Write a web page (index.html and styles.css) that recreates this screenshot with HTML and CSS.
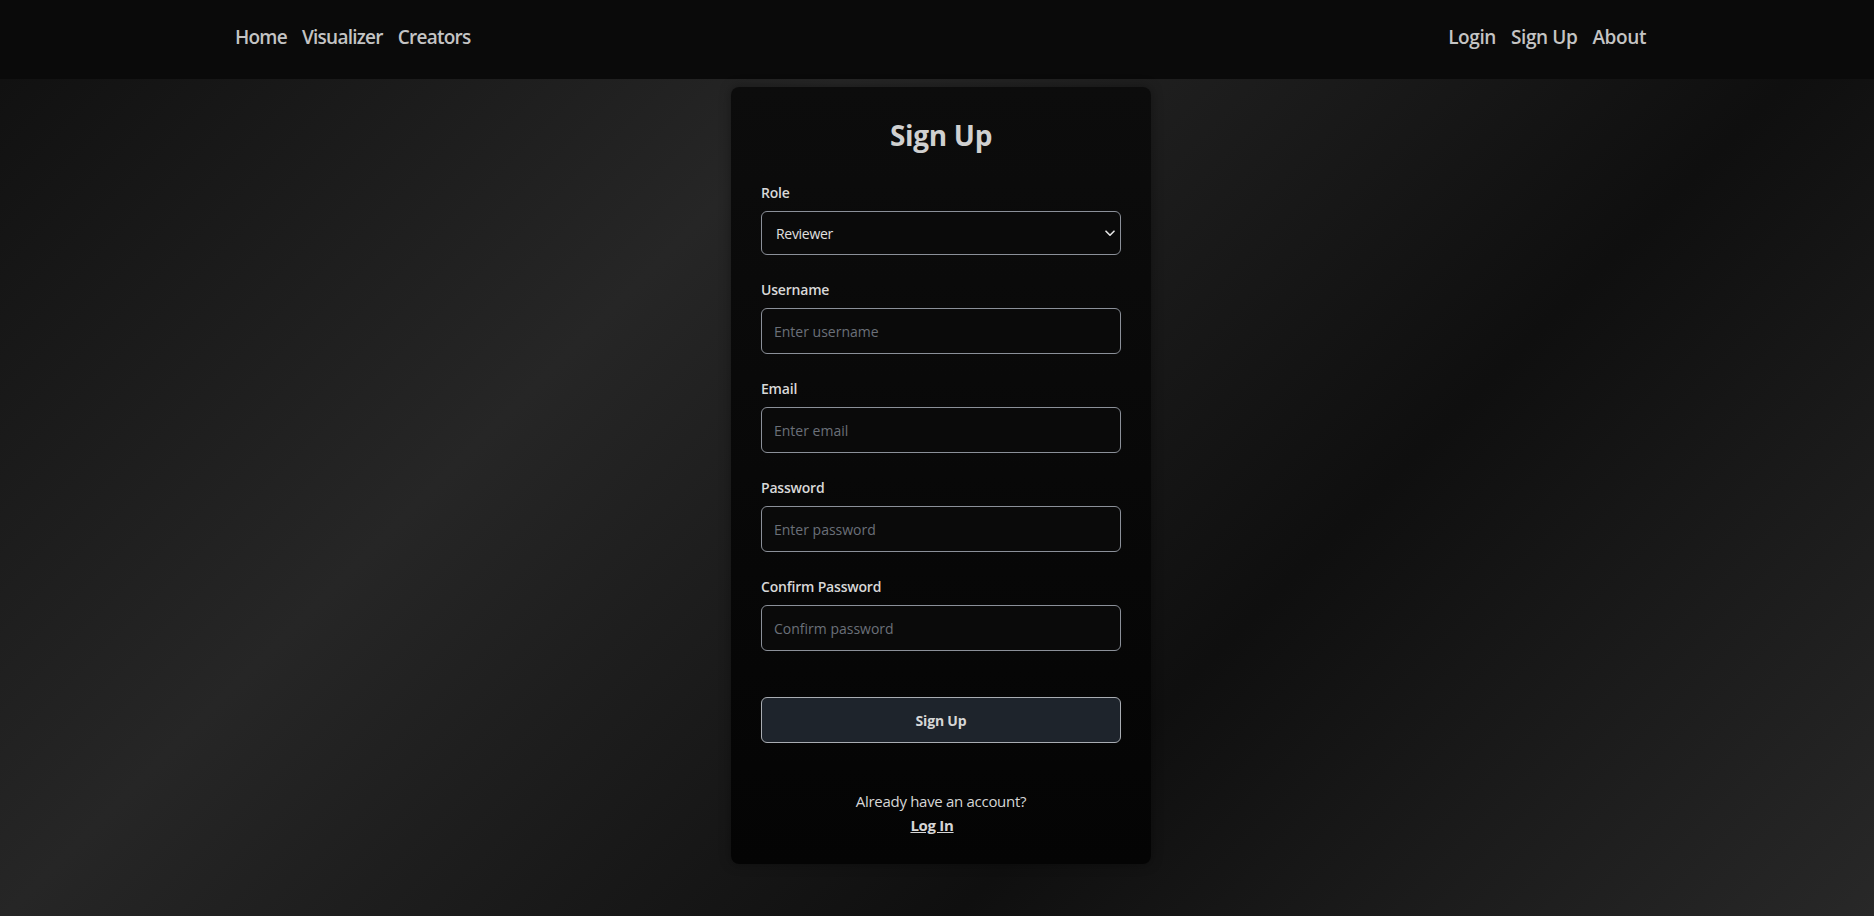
FILE: index.html
```html
<!DOCTYPE html>
<html lang="en">
<head>
<meta charset="utf-8">
<title>Sign Up</title>
<link rel="stylesheet" href="styles.css">
</head>
<body>
<nav class="topbar">
  <div class="nav-group">
    <a class="nav-link" href="#">Home</a>
    <a class="nav-link" href="#">Visualizer</a>
    <a class="nav-link" href="#">Creators</a>
  </div>
  <div class="nav-group">
    <a class="nav-link" href="#">Login</a>
    <a class="nav-link" href="#">Sign Up</a>
    <a class="nav-link" href="#">About</a>
  </div>
</nav>
<main class="page">
  <form class="card">
    <h1 class="title">Sign Up</h1>
    <div class="field">
      <label class="label" for="role">Role</label>
      <div class="select-wrap">
        <select id="role" class="control select">
          <option>Reviewer</option>
          <option>Creator</option>
        </select>
        <svg class="chev" width="10" height="7" viewBox="0 0 10 7"><path d="M1 1.2 L5 5.2 L9 1.2" fill="none" stroke="#e6e6e6" stroke-width="1.6" stroke-linecap="round" stroke-linejoin="round"/></svg>
      </div>
    </div>
    <div class="field">
      <label class="label" for="username">Username</label>
      <input id="username" class="control" type="text" placeholder="Enter username">
    </div>
    <div class="field">
      <label class="label" for="email">Email</label>
      <input id="email" class="control" type="email" placeholder="Enter email">
    </div>
    <div class="field">
      <label class="label" for="password">Password</label>
      <input id="password" class="control" type="password" placeholder="Enter password">
    </div>
    <div class="field">
      <label class="label" for="confirm">Confirm Password</label>
      <input id="confirm" class="control" type="password" placeholder="Confirm password">
    </div>
    <button class="submit" type="button">Sign Up</button>
    <div class="footer">
      <p class="footer-text">Already have an account?</p>
      <a class="footer-link" href="#">Log In</a>
    </div>
  </form>
</main>
</body>
</html>
```

FILE: styles.css
```css
* { box-sizing: border-box; }
html, body { margin: 0; padding: 0; }
body {
  min-height: 916px;
  font-family: "Open Sans", "Noto Sans", sans-serif;
  color: #d4d4d4;
  background: linear-gradient(135deg, #0f0f0f 0%, #262626 33%, #0f0f0f 67%, #282828 100%);
}
.topbar {
  height: 79px;
  background: #0a0a0a;
  display: flex;
  align-items: center;
  justify-content: space-between;
  padding: 0 228px 6px 235px;
}
.nav-group { display: flex; gap: 15px; }
.nav-link {
  color: #c4c4c4;
  text-decoration: none;
  font-size: 19px;
  font-weight: 600;
  letter-spacing: -0.4px;
}
.nav-group:first-child .nav-link { letter-spacing: -0.75px; }
.page {
  display: flex;
  justify-content: center;
  padding: 8px 0 52px 8px;
}
.card {
  width: 420px;
  height: 777px;
  padding: 30px 30px;
  border-radius: 8px;
  background: linear-gradient(180deg, #0c0c0c 0%, #080808 50%, #040404 100%);
  box-shadow: 0 0 12px rgba(0,0,0,0.35);
}
.title {
  margin: 0 0 30px;
  text-align: center;
  font-size: 28px;
  font-weight: 700;
  line-height: 36px;
  color: #d0d0d0;
  letter-spacing: -0.3px;
}
.field { margin-bottom: 25px; }
.label {
  display: block;
  font-size: 14px;
  font-weight: 600;
  line-height: 20px;
  margin-bottom: 8px;
  color: #d8d8d8;
  letter-spacing: -0.2px;
}
.control {
  display: block;
  width: 360px;
  height: 46px;
  padding: 0 12px;
  border: 1px solid #8b9099;
  border-radius: 6px;
  background: #0a0a0a;
  color: #e0e0e0;
  font-family: inherit;
  font-size: 14px;
  outline: none;
}
.control::placeholder { color: #6b7079; }
.select-wrap { position: relative; }
.select {
  -webkit-appearance: none;
  appearance: none;
  height: 44px;
  padding-left: 14px;
  font-size: 14px;
  letter-spacing: -0.3px;
}
.chev { position: absolute; right: 6px; top: 19px; pointer-events: none; }
.submit {
  display: block;
  width: 360px;
  height: 46px;
  margin-top: 46px;
  border: 1px solid #a9adb3;
  border-radius: 6px;
  background: #1e242c;
  color: #d6d6d6;
  font-family: inherit;
  font-size: 14px;
  font-weight: 700;
  letter-spacing: -0.2px;
}
.footer {
  margin-top: 46px;
  text-align: center;
}
.footer-text {
  margin: 0;
  font-size: 15px;
  line-height: 24px;
  color: #d6d6d6;
  letter-spacing: -0.3px;
}
.footer-link {
  display: inline-block;
  margin-right: 18px;
  font-size: 15px;
  font-weight: 700;
  line-height: 24px;
  color: #d6d6d6;
  text-decoration: underline;
  letter-spacing: -0.3px;
}
```
